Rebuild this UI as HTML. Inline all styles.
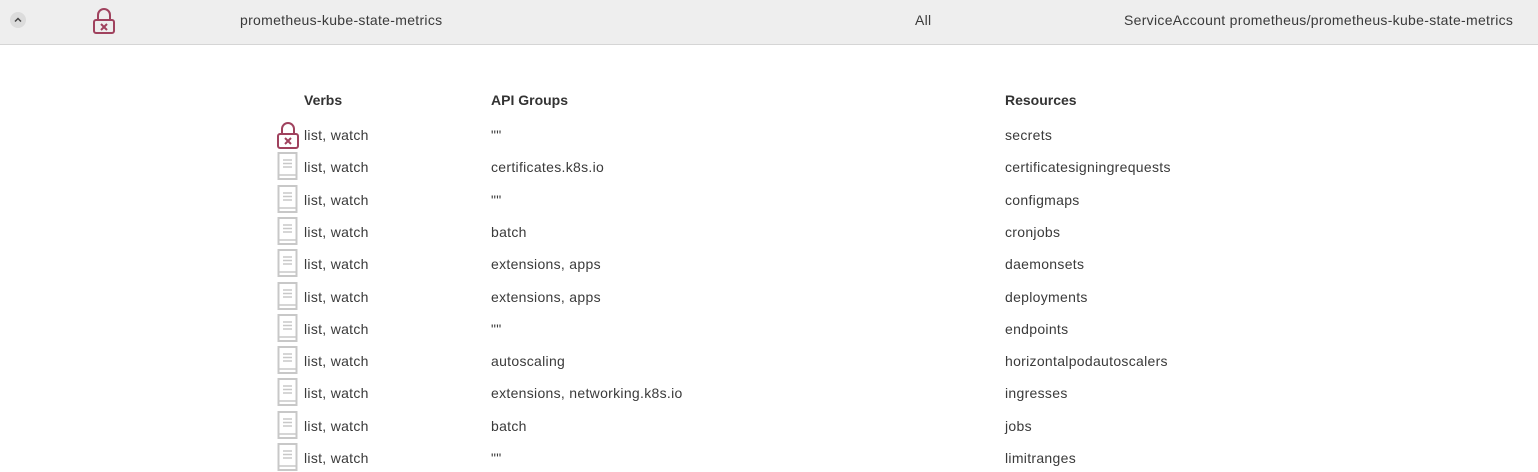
<!DOCTYPE html>
<html><head><style>
body{margin:0;width:1538px;height:472px;overflow:hidden;background:#fff;font-family:"Liberation Sans",sans-serif;font-size:14px;color:#3a3a3a;}
.hdr{position:absolute;left:0;top:0;width:1538px;height:44px;background:#eeeeee;border-bottom:1px solid #d5d5d5;}
.t{position:absolute;white-space:nowrap;line-height:16px;letter-spacing:0.3px;}
.h{font-weight:bold;color:#333;letter-spacing:0;}
svg{position:absolute;}
</style></head><body>
<div class="hdr">
<div style="position:absolute;left:10px;top:12px;width:16px;height:16px;border-radius:8px;background:#dcdcdc"></div>
<svg style="left:12px;top:14px" width="12" height="12" viewBox="0 0 12 12"><path d="M3 7.5L6 4.5L9 7.5" fill="none" stroke="#444" stroke-width="1.5"/></svg>
<svg style="left:92px;top:7px" width="24" height="28" viewBox="0 0 24 28"><path d="M6 13V8a6 6 0 0 1 12 0v5" fill="none" stroke="#a0425e" stroke-width="2"/><rect x="2" y="13" width="20" height="13" rx="2" fill="none" stroke="#a0425e" stroke-width="2"/><path d="M9 17l6 6M15 17l-6 6" stroke="#a0425e" stroke-width="2"/></svg>
<div class="t" style="left:240px;top:12px">prometheus-kube-state-metrics</div>
<div class="t" style="left:915px;top:12px">All</div>
<div class="t" style="left:1124px;top:12px">ServiceAccount prometheus/prometheus-kube-state-metrics</div>
</div>
<div class="t h" style="left:304px;top:92px">Verbs</div>
<div class="t h" style="left:491px;top:92px">API Groups</div>
<div class="t h" style="left:1005px;top:92px">Resources</div>
<svg style="left:276px;top:121px" width="24" height="29" viewBox="0 0 24 29"><path d="M6 13V8a6 6 0 0 1 12 0v5" fill="none" stroke="#a0425e" stroke-width="2"/><rect x="2" y="13" width="20" height="14" rx="2" fill="none" stroke="#a0425e" stroke-width="2"/><path d="M9 17l6 6M15 17l-6 6" stroke="#a0425e" stroke-width="2"/></svg>
<div id="rows"></div>
<script>
var d=[["list, watch",'""',"secrets"],["list, watch","certificates.k8s.io","certificatesigningrequests"],["list, watch",'""',"configmaps"],["list, watch","batch","cronjobs"],["list, watch","extensions, apps","daemonsets"],["list, watch","extensions, apps","deployments"],["list, watch",'""',"endpoints"],["list, watch","autoscaling","horizontalpodautoscalers"],["list, watch","extensions, networking.k8s.io","ingresses"],["list, watch","batch","jobs"],["list, watch",'""',"limitranges"]];
var h="";
for(var i=0;i<d.length;i++){var y=Math.round(134+i*32.3);
h+='<div class="t" style="left:304px;top:'+(y-7)+'px">'+d[i][0]+'</div><div class="t" style="left:491px;top:'+(y-7)+'px">'+d[i][1]+'</div><div class="t" style="left:1005px;top:'+(y-7)+'px">'+d[i][2]+'</div>';
if(i>0)h+='<svg style="left:277px;top:'+(y-14)+'px" width="21" height="28" viewBox="0 0 21 28"><rect x="1.5" y="1" width="18" height="26" fill="none" stroke="#c8c8c8" stroke-width="2"/><path d="M1.5 23h18" stroke="#c8c8c8" stroke-width="1.5"/><path d="M6 8h9M6 11.5h9M6 15h9" stroke="#c8c8c8" stroke-width="1.5"/></svg>';}
document.getElementById("rows").innerHTML=h;
</script>
</body></html>
